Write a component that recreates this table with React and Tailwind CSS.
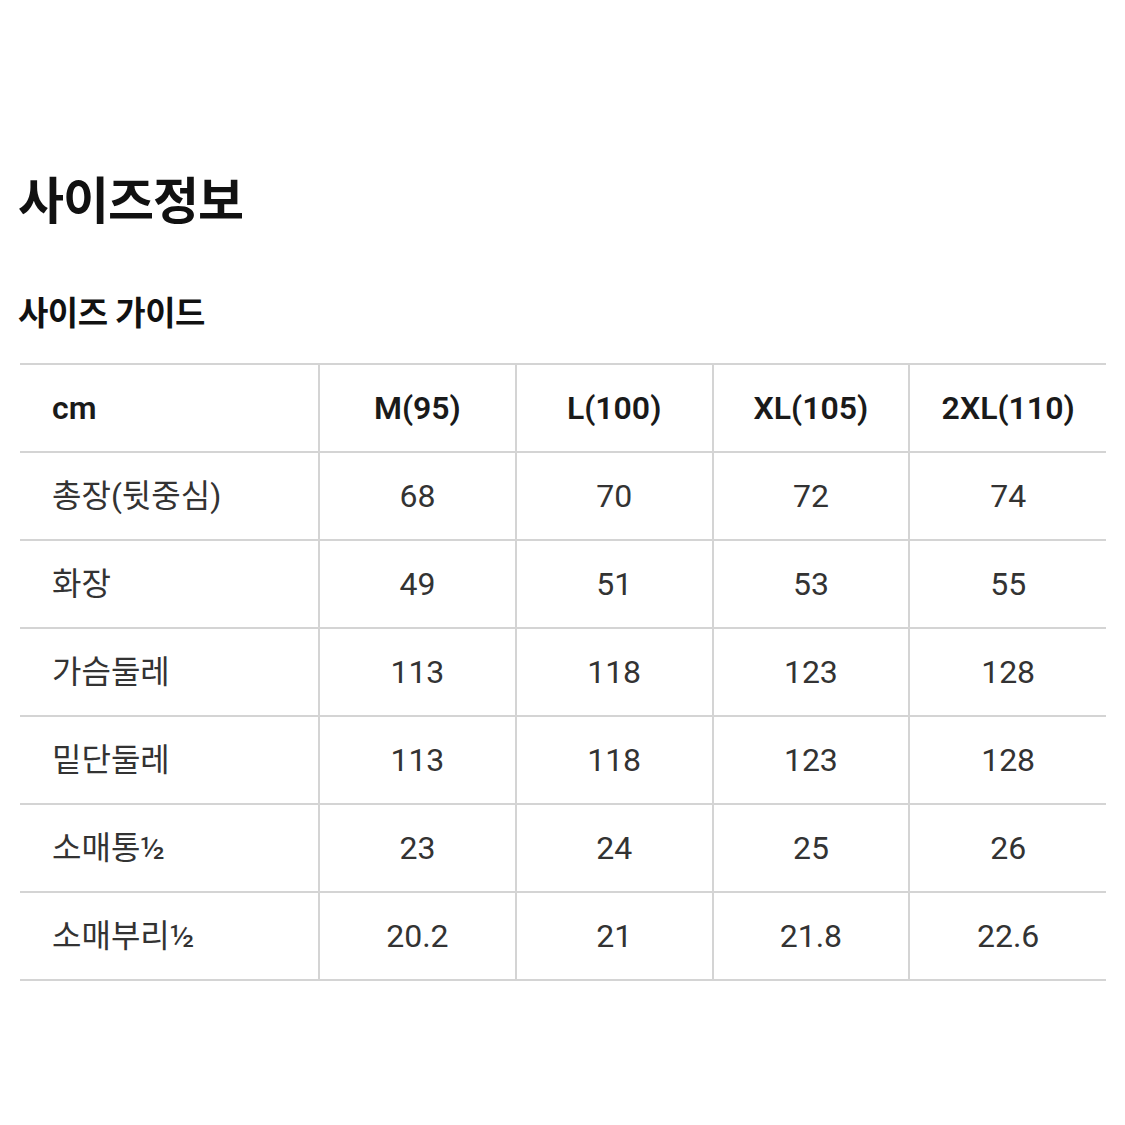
const sizes = ["M(95)", "L(100)", "XL(105)", "2XL(110)"];

const rows = [
  { label: "총장(뒷중심)", values: ["68", "70", "72", "74"] },
  { label: "화장", values: ["49", "51", "53", "55"] },
  { label: "가슴둘레", values: ["113", "118", "123", "128"] },
  { label: "밑단둘레", values: ["113", "118", "123", "128"] },
  { label: "소매통½", values: ["23", "24", "25", "26"] },
  { label: "소매부리½", values: ["20.2", "21", "21.8", "22.6"] },
];

const App = () => {
  return (
    <div
      className="w-[1125px] h-[1125px] bg-white text-[#111] pt-[170px] pl-[18px] pr-[19px]"
      style={{ fontFamily: 'Roboto, "Noto Sans CJK KR", sans-serif' }}
    >
      <h1 className="text-[50px] leading-[64px] font-bold tracking-[-1px]">사이즈정보</h1>
      <h2 className="mt-[60px] text-[33px] leading-[40px] font-semibold tracking-[-0.5px]">사이즈 가이드</h2>

      <table className="mt-[29px] ml-[2px] w-[1086px] border-collapse table-fixed">
        <colgroup>
          <col className="w-[299px]" />
          <col />
          <col />
          <col />
          <col />
        </colgroup>
        <thead>
          <tr className="h-[88px] border-y-2 border-[#d4d4d4]">
            <th className="pl-[32px] text-left text-[32px] font-semibold text-[#1a1a1a]">cm</th>
            {sizes.map((s) => (
              <th key={s} className="border-l-2 border-[#d4d4d4] text-center text-[32px] font-semibold text-[#1a1a1a]">
                {s}
              </th>
            ))}
          </tr>
        </thead>
        <tbody>
          {rows.map((r) => (
            <tr key={r.label} className="h-[88px] border-b-2 border-[#d4d4d4]">
              <td className="pl-[32px] text-left text-[32px] text-[#333]">{r.label}</td>
              {r.values.map((v, i) => (
                <td key={i} className="border-l-2 border-[#d4d4d4] text-center text-[32px] text-[#333]">
                  {v}
                </td>
              ))}
            </tr>
          ))}
        </tbody>
      </table>
    </div>
  );
};

export default App;
